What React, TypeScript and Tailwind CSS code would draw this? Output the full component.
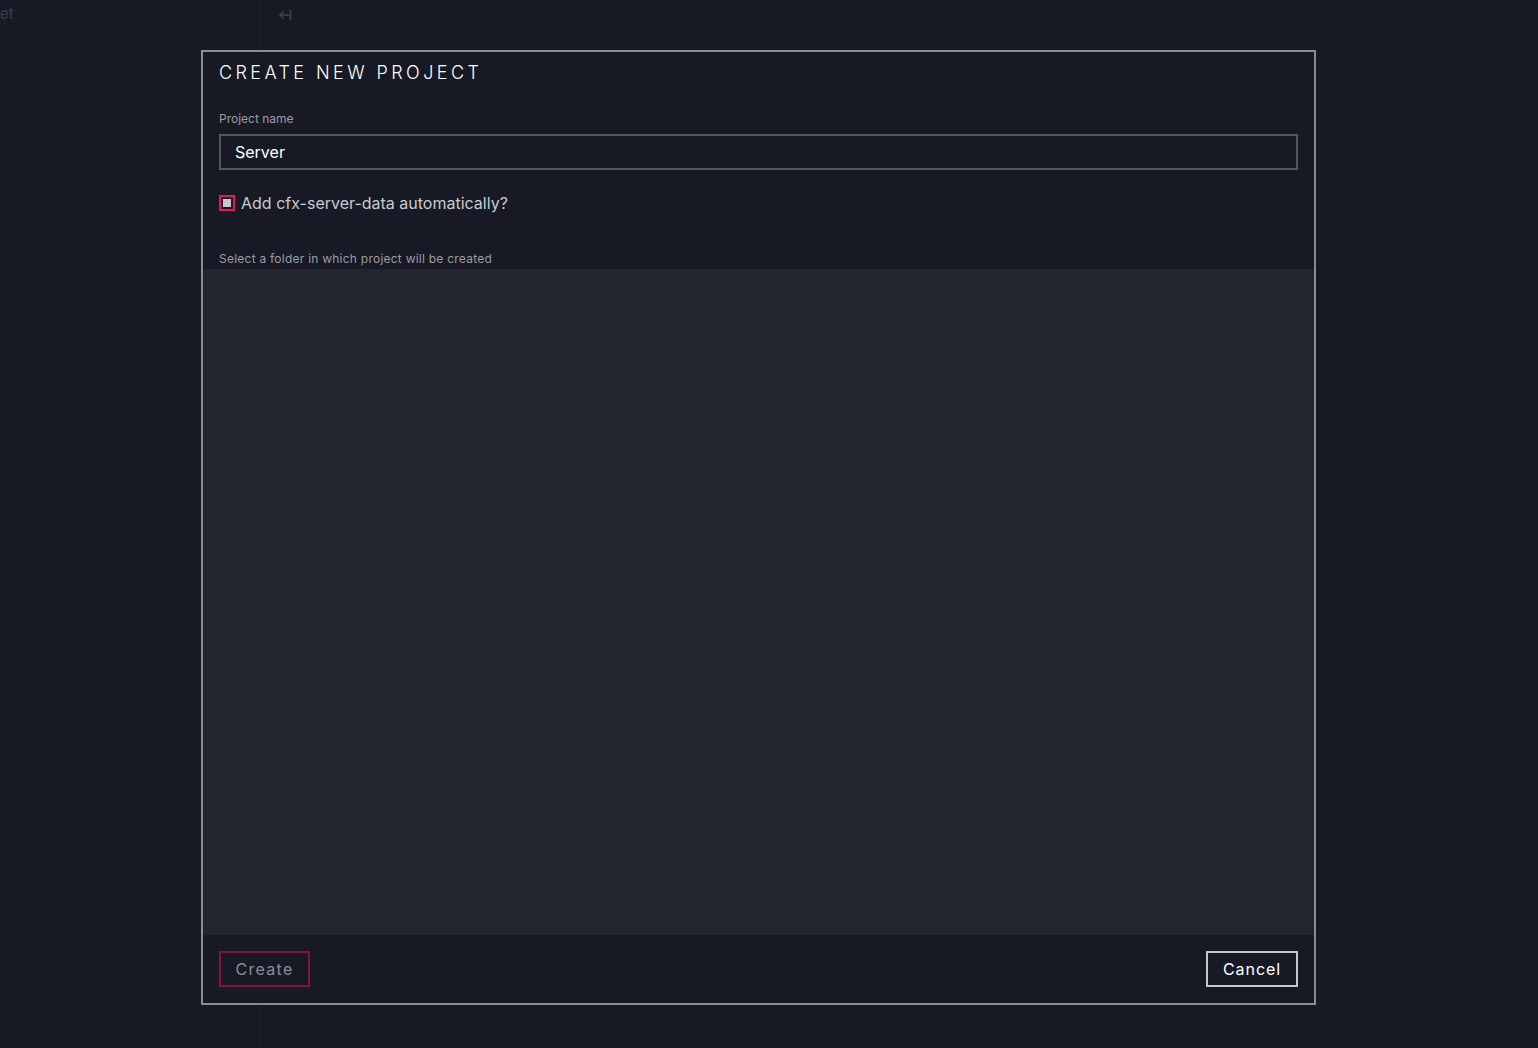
import React, { useState } from 'react';

export default function App() {
  const [name, setName] = useState('Server');
  const [addData, setAddData] = useState(true);

  return (
    <div className="relative h-[1048px] w-full overflow-hidden bg-[#161a25] font-['Inter',sans-serif]">
      {/* background app behind the modal */}
      <div className="absolute left-0 top-0 flex h-full w-full">
        <div className="h-full w-[260px] border-r border-[#1c202b]">
          <div className="pt-[5px] text-[15px] leading-[18px] text-[#3b3f4a]">et</div>
        </div>
        <div className="pl-[18px] pt-[9px]">
          <svg width="14" height="12" viewBox="0 0 14 12" fill="none" stroke="#3e424d" strokeWidth="1.6">
            <path d="M11 6H2M5.5 2.5L2 6l3.5 3.5" />
            <path d="M12.5 1v10" />
          </svg>
        </div>
      </div>

      {/* modal */}
      <div className="relative mt-[50px] ml-[201px] flex h-[955px] w-[1115px] flex-col border-2 border-[#8c8c8c] bg-[#171a25]">
        <div className="px-4 pt-[10px]">
          <h1 className="text-[18px] font-light uppercase leading-[22px] tracking-[0.19em] text-white">
            Create new project
          </h1>
          <label className="mt-[27px] block text-[12px] leading-[16px] text-[#9a9ca3]">Project name</label>
          <input
            value={name}
            onChange={(e) => setName(e.target.value)}
            className="mt-[7px] block h-[36px] w-full border-2 border-[#55575d] bg-[#171a25] px-[14px] text-[16px] text-white outline-none"
          />
          <label className="mt-[23px] flex items-center gap-[6px] text-[16px] leading-[20px] text-[#c9cacd]">
            <button
              onClick={() => setAddData(!addData)}
              className="flex h-[16px] w-[16px] items-center justify-center border-2 border-[#e2175e]"
            >
              {addData && <span className="block h-[8px] w-[8px] bg-[#c8c8c8]" />}
            </button>
            Add cfx-server-data automatically?
          </label>
          <div className="mt-[38px] text-[12px] leading-[16px] tracking-[0.02em] text-[#9a9ca3]">
            Select a folder in which project will be created
          </div>
        </div>
        <div className="mt-[2px] flex-1 bg-[#22252f]" />
        <div className="flex items-center justify-between px-4 pb-[16px] pt-[16px]">
          <button className="h-[36px] w-[91px] border-2 border-[#8a1040] text-[16px] tracking-[0.08em] text-[#8d8e93]">
            Create
          </button>
          <button className="h-[36px] w-[92px] border-2 border-[#c8c8c8] text-[16px] tracking-[0.06em] text-white">
            Cancel
          </button>
        </div>
      </div>
    </div>
  );
}
